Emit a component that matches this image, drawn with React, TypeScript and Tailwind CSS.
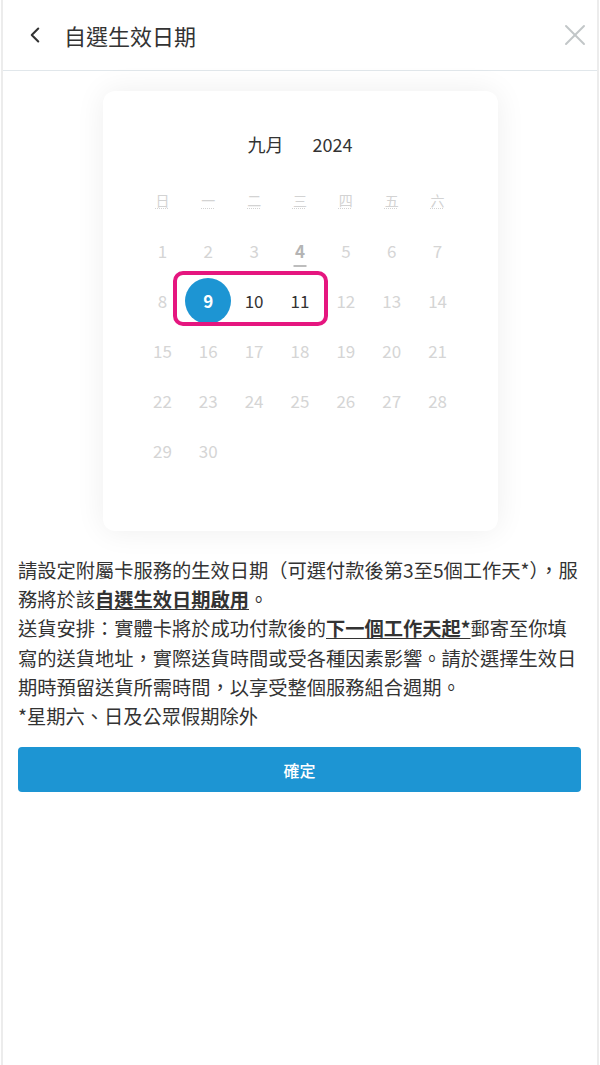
import { ChevronLeft, X } from "lucide-react";

const WEEKDAYS = ["日", "一", "二", "三", "四", "五", "六"];

// September 2024 starts on a Sunday
const WEEKS: (number | null)[][] = [
  [1, 2, 3, 4, 5, 6, 7],
  [8, 9, 10, 11, 12, 13, 14],
  [15, 16, 17, 18, 19, 20, 21],
  [22, 23, 24, 25, 26, 27, 28],
  [29, 30, null, null, null, null, null],
];

const SELECTED = 9;
const TODAY = 4;
const ENABLED = [9, 10, 11];

function DayCell({ day }: { day: number | null }) {
  if (day === null) return <div className="h-[50px]" />;

  if (day === SELECTED) {
    return (
      <div className="h-[50px] flex items-center justify-center">
        <div className="w-[46px] h-[46px] rounded-full bg-[#1d95d3] flex items-center justify-center text-white text-[17px] font-bold">
          {day}
        </div>
      </div>
    );
  }

  if (day === TODAY) {
    return (
      <div className="h-[50px] flex flex-col items-center justify-center relative">
        <span className="text-[17px] font-bold text-[#b4b4b4]">{day}</span>
        <span className="absolute left-1/2 -translate-x-1/2 top-[39px] w-[13px] h-[2px] bg-[#bdbdbd]" />
      </div>
    );
  }

  const enabled = ENABLED.includes(day);
  return (
    <div
      className={
        enabled
          ? "h-[50px] flex items-center justify-center text-[17px] text-[#333333]"
          : "h-[50px] flex items-center justify-center text-[17px] text-[#d5d5d5]"
      }
    >
      {day}
    </div>
  );
}

export default function App() {
  return (
    <div
      className="min-h-[1065px] bg-white mx-[1px] border-x-2 border-[#ececec] text-[#333333]"
      style={{ fontFamily: '"Noto Sans CJK TC", "Noto Sans", sans-serif' }}
    >
      {/* Header */}
      <div className="h-[71px] border-b border-[#e1e7eb] flex items-center pl-[19px] pr-[4px]">
        <ChevronLeft className="w-[26px] h-[26px] text-[#333333]" strokeWidth={1.9} />
        <h1 className="ml-[16px] text-[22px] leading-none text-[#333333]">自選生效日期</h1>
        <X className="ml-auto w-[36px] h-[36px] text-[#c2c6c8]" strokeWidth={1.3} />
      </div>

      {/* Calendar */}
      <div className="relative mt-[20px] mx-auto w-[395px] h-[440px] rounded-[12px] bg-white shadow-[0_0_30px_rgba(0,0,0,0.07)] px-[37px] pt-[40px]">
        <div className="h-[26px] flex items-center justify-center gap-[29px] text-[18px] text-[#333333]">
          <span>九月</span>
          <span>2024</span>
        </div>

        <div className="mt-[17px] grid grid-cols-7 h-[52px] items-center">
          {WEEKDAYS.map((w) => (
            <div key={w} className="flex justify-center">
              <abbr className="text-[14px] text-[#d3d3d3] underline decoration-dotted decoration-1 underline-offset-2">
                {w}
              </abbr>
            </div>
          ))}
        </div>

        {WEEKS.map((week, i) => (
          <div key={i} className="grid grid-cols-7">
            {week.map((d, j) => (
              <DayCell key={j} day={d} />
            ))}
          </div>
        ))}

        {/* highlighted range */}
        <div className="absolute left-[70px] top-[180px] w-[155px] h-[55px] rounded-[10px] border-[4px] border-[#e5167f] pointer-events-none" />
      </div>

      {/* Notes */}
      <div className="mt-[25px] px-[15px] text-[19.25px] leading-[29.2px] text-[#333333]">
        <p>
          請設定附屬卡服務的生效日期（可選付款後第3至5個工作天*），服務將於該
          <span className="font-bold underline underline-offset-2">自選生效日期啟用</span>。
        </p>
        <p>
          送貨安排：實體卡將於成功付款後的
          <span className="font-bold underline underline-offset-2">下一個工作天起*</span>
          郵寄至你填寫的送貨地址，實際送貨時間或受各種因素影響。請於選擇生效日期時預留送貨所需時間，以享受整個服務組合週期。
        </p>
        <p>*星期六、日及公眾假期除外</p>
      </div>

      <div className="pl-[15px] pr-[16px] mt-[16px]">
        <button className="w-full h-[45px] rounded-[4px] bg-[#1d95d3] text-white text-[16px] font-medium">
          確定
        </button>
      </div>
    </div>
  );
}
